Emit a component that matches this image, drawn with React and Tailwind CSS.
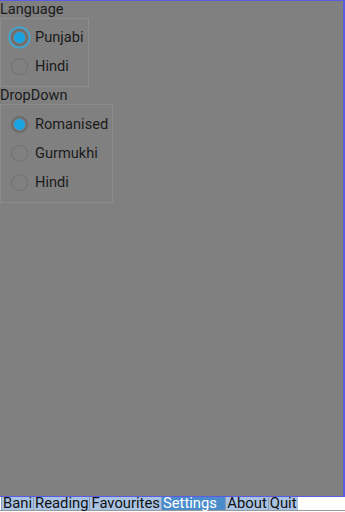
import React, { useState } from 'react';

const font = { fontFamily: 'Roboto, "Noto Sans", sans-serif' };

const Radio = ({ label, checked, focused, onClick }) => (
  <div className="flex items-center h-[29px] cursor-pointer" onClick={onClick}>
    <div className="w-[37px] flex items-center justify-center">
      <div
        className={
          'w-[19px] h-[19px] rounded-full flex items-center justify-center ' +
          (focused ? 'ring-[1.5px] ring-[#37a9d9]' : '')
        }
      >
        <div
          className={
            'w-[17px] h-[17px] rounded-full flex items-center justify-center ' +
            (checked ? 'border-2 border-[#6b6b6b]' : 'border-[1.5px] border-[#6f6f6f]')
          }
        >
          {checked && <div className="w-[11px] h-[11px] rounded-full bg-[#1aa3e3]" />}
        </div>
      </div>
    </div>
    <span className="text-[14.6px] text-[#1b1b1b] -ml-[3px]">{label}</span>
  </div>
);

const Group = ({ title, items, value, setValue, width, focused, pt }) => (
  <div>
    <div className="text-[14.5px] leading-[17px] h-[17px] text-[#1b1b1b]">{title}</div>
    <div className={'border border-[#8c8c8c] pb-[5px] ' + pt} style={{ width }}>
      {items.map((it) => (
        <Radio
          key={it}
          label={it}
          checked={value === it}
          focused={focused && value === it}
          onClick={() => setValue(it)}
        />
      ))}
    </div>
  </div>
);

const tabs = ['Bani', 'Reading', 'Favourites', 'Settings\u00a0\u00a0', 'About', 'Quit'];

const App = () => {
  const [lang, setLang] = useState('Punjabi');
  const [drop, setDrop] = useState('Romanised');
  const [tab, setTab] = useState(3);
  return (
    <div className="w-[345px] h-[512px] bg-white flex flex-col overflow-hidden" style={font}>
      <div className="w-[345px] h-[497px] bg-[#808080] border-t-[1px] border-r-[2px] border-b-[1px] border-[#5b5be6] flex flex-col">
        <Group
          title="Language"
          items={['Punjabi', 'Hindi']}
          value={lang}
          setValue={setLang}
          width={89}
          pt="pt-[4px]"
          focused
        />
        <Group
          title="DropDown"
          items={['Romanised', 'Gurmukhi', 'Hindi']}
          value={drop}
          setValue={setDrop}
          width={113}
          pt="pt-[5px]"
        />
      </div>
      <div className="flex h-[13px] pl-[1px] border-b border-[#9a9a9a] box-content">
        {tabs.map((t, i) => (
          <div
            key={t}
            onClick={() => setTab(i)}
            className={
              'h-[13px] px-[1px] flex items-center text-[14.8px] leading-[13px] border-l border-[#8a9bb3] cursor-pointer ' +
              (tab === i ? 'bg-[#4a8ccb] text-white' : 'bg-[#a9c3e3] text-[#111]')
            }
          >
            {t}
          </div>
        ))}
      </div>
    </div>
  );
};

export default App;
